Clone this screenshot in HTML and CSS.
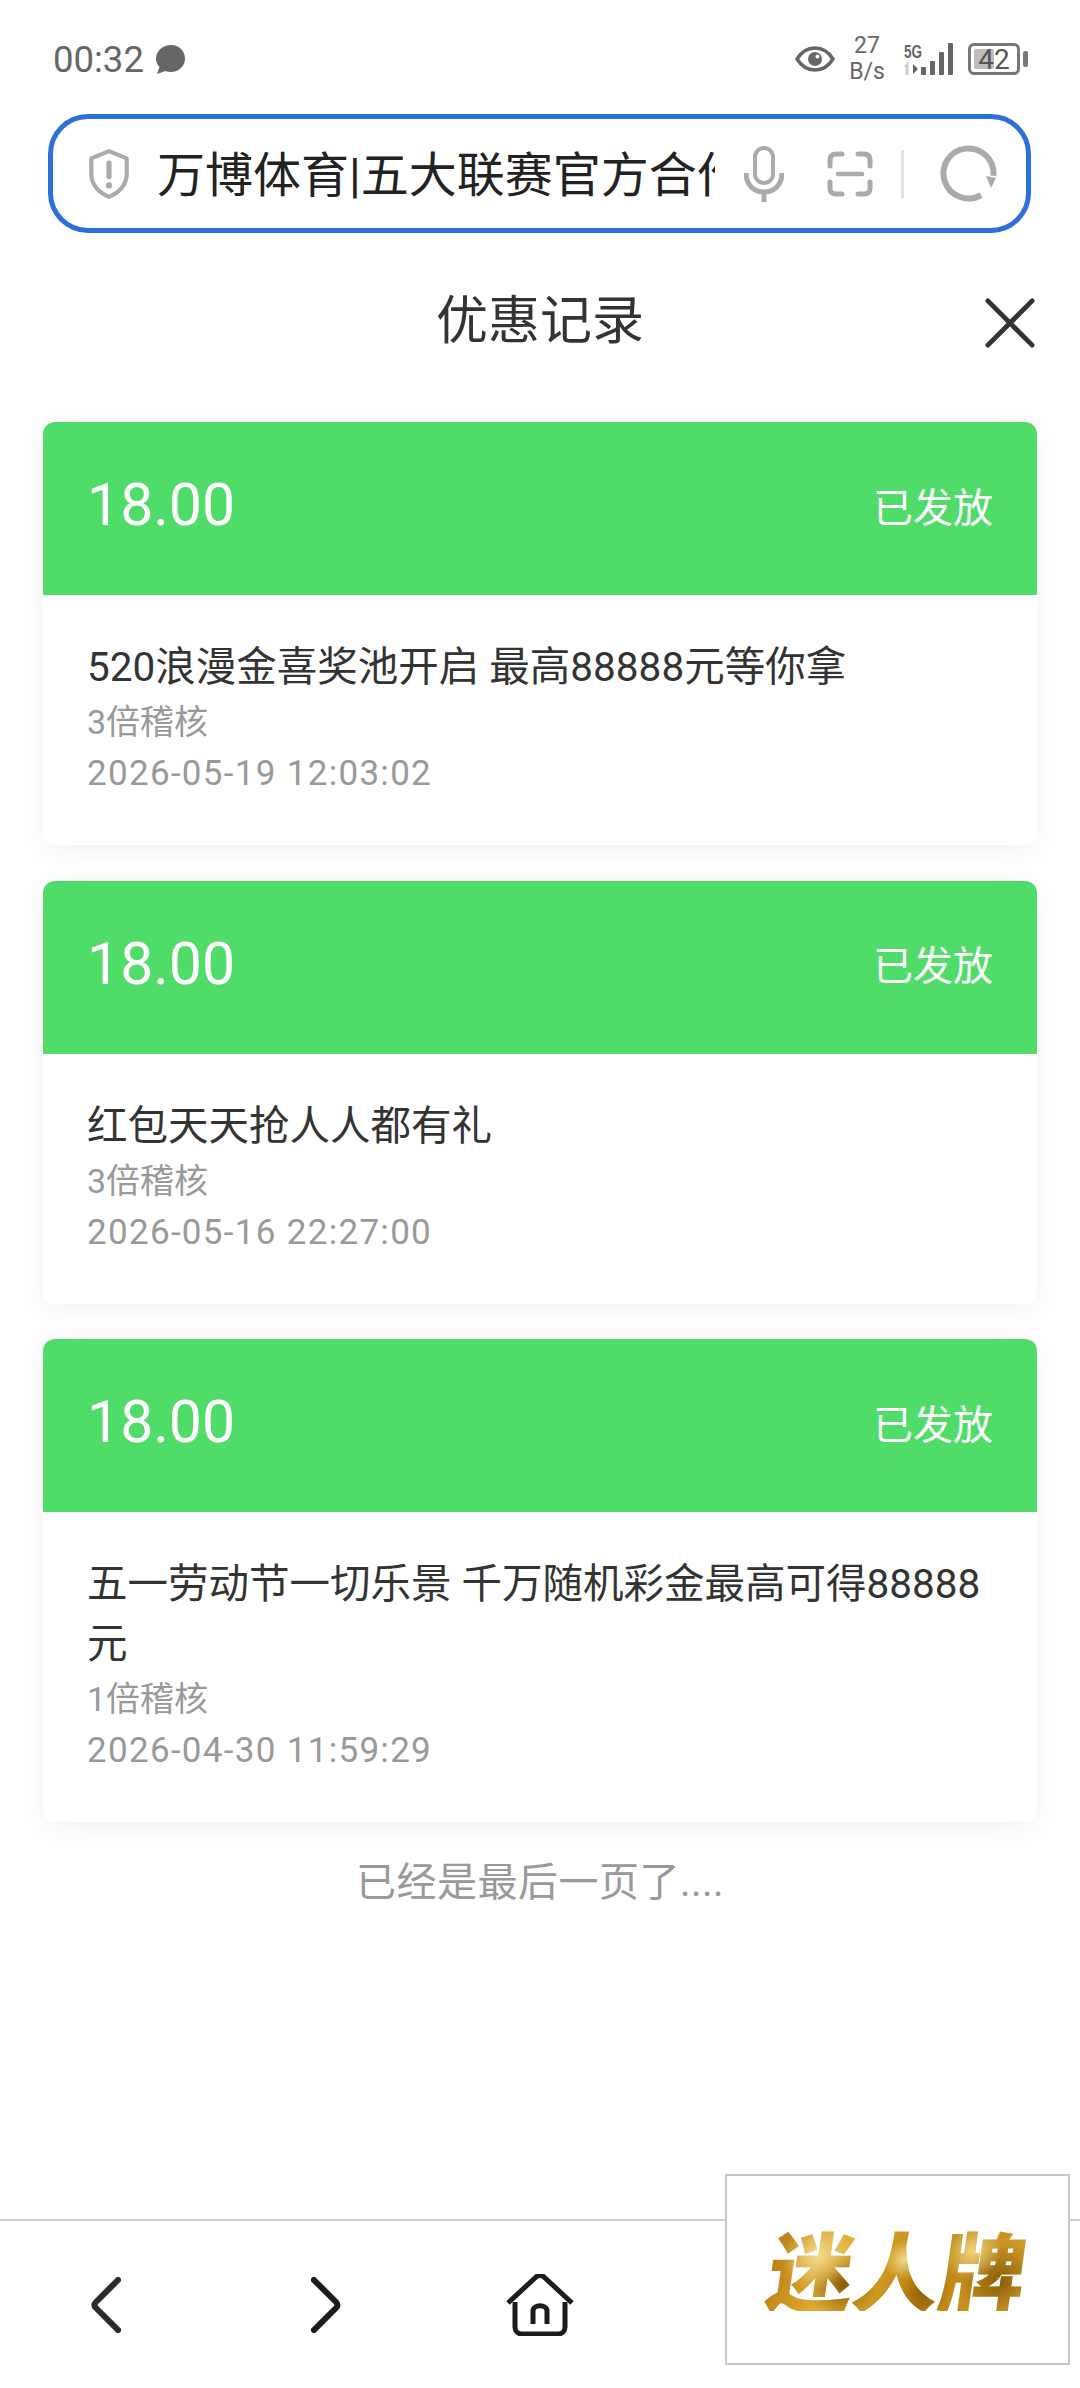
FILE: index.html
```html
<!DOCTYPE html>
<html lang="zh-CN">
<head>
    <meta charset="UTF-8">
    <meta name="viewport" content="width=device-width, initial-scale=1.0">
    <title>优惠记录</title>
    <link rel="stylesheet" href="styles.css">
</head>
<body>
    <div class="status-bar">
        <div class="status-left">
            <span class="clock">00:32</span>
            <svg class="bubble" viewBox="0 0 32 32"><path d="M17 2c8 0 14 6 14 13.500S25 29 17 29c-2 0-4-.3-5.500-1L3 31l2.500-7C3 21.500 2 18.500 2 15.500 2 8 9 2 17 2z" fill="#666"/></svg>
        </div>
        <div class="status-right">
            <svg class="eye" viewBox="0 0 40 26"><path d="M2 13C7 5 13 2 20 2s13 3 18 11c-5 8-11 11-18 11S7 21 2 13z" fill="none" stroke="#666" stroke-width="3.500"/><circle cx="20" cy="13" r="7" fill="#666"/><circle cx="22.500" cy="10.500" r="2" fill="#fff"/></svg>
            <div class="speed"><span>27</span><span>B/s</span></div>
            <svg class="signal" viewBox="0 0 56 34">
                <text x="0" y="16" class="signal-label" textLength="18" lengthAdjust="spacingAndGlyphs">5G</text>
                <path d="M3 33V23l-2 2" fill="none" stroke="#ccc" stroke-width="3"/>
                <path d="M9 22l5 5-5 5z" fill="#666"/>
                <rect x="17" y="25" width="5" height="8" rx="1" fill="#666"/>
                <rect x="26" y="19" width="5" height="14" rx="1" fill="#666"/>
                <rect x="35" y="10" width="5" height="23" rx="1" fill="#666"/>
                <rect x="44" y="1" width="5" height="32" rx="1" fill="#666"/>
            </svg>
            <div class="battery">
                <div class="battery-body">
                    <div class="battery-fill"></div>
                    <span class="battery-num">42</span>
                </div>
                <div class="battery-nub"></div>
            </div>
        </div>
    </div>

    <div class="url-bar">
        <svg class="shield" viewBox="0 0 40 48"><path d="M20 2l17 7v15c0 10-7 18-17 22C10 42 3 34 3 24V9z" fill="none" stroke="#aaa" stroke-width="4" stroke-linejoin="round"/><rect x="17.500" y="11" width="5" height="18" rx="2.500" fill="#aaa"/><circle cx="20" cy="35" r="3" fill="#aaa"/></svg>
        <div class="url-text">万博体育|五大联赛官方合作伙伴</div>
        <svg class="mic" viewBox="0 0 40 56"><rect x="11" y="2" width="18" height="35" rx="9" fill="none" stroke="#aaa" stroke-width="4"/><path d="M2 27c0 12 8 19 18 19s18-7 18-19M20 46v10" fill="none" stroke="#aaa" stroke-width="5"/></svg>
        <svg class="scan" viewBox="0 0 46 46"><path d="M3 15V9c0-4 2-6 6-6h6M31 3h6c4 0 6 2 6 6v6M43 31v6c0 4-2 6-6 6h-6M15 43H9c-4 0-6-2-6-6v-6" fill="none" stroke="#aaa" stroke-width="5" stroke-linecap="round"/><path d="M11 23h24" stroke="#aaa" stroke-width="4.500" stroke-linecap="round"/></svg>
        <div class="url-divider"></div>
        <svg class="reload" viewBox="0 0 57 57"><path d="M41 50.100A25 25 0 1 1 53.400 30.700" fill="none" stroke="#aaa" stroke-width="6"/><path d="M46 31l10 2-5 10z" fill="#aaa"/></svg>
    </div>

    <div class="page-head">
        <span></span>
        <h1 class="page-title">优惠记录</h1>
        <svg class="close" viewBox="0 0 52 52"><path d="M3 3l46 46M49 3L3 49" stroke="#333" stroke-width="5" stroke-linecap="round"/></svg>
    </div>

    <div class="list">
        <div class="card">
            <div class="card-head">
                <span class="amount">18.00</span>
                <span class="state">已发放</span>
            </div>
            <div class="card-body">
                <div class="card-title">520浪漫金喜奖池开启 最高88888元等你拿</div>
                <div class="card-sub">3倍稽核</div>
                <div class="card-date">2026-05-19 12:03:02</div>
            </div>
        </div>
        <div class="card">
            <div class="card-head">
                <span class="amount">18.00</span>
                <span class="state">已发放</span>
            </div>
            <div class="card-body">
                <div class="card-title">红包天天抢人人都有礼</div>
                <div class="card-sub">3倍稽核</div>
                <div class="card-date">2026-05-16 22:27:00</div>
            </div>
        </div>
        <div class="card">
            <div class="card-head">
                <span class="amount">18.00</span>
                <span class="state">已发放</span>
            </div>
            <div class="card-body">
                <div class="card-title">五一劳动节一切乐景 千万随机彩金最高可得88888元</div>
                <div class="card-sub">1倍稽核</div>
                <div class="card-date">2026-04-30 11:59:29</div>
            </div>
        </div>
        <div class="list-end">已经是最后一页了....</div>
    </div>

    <div class="bottom-nav">
        <svg class="nav-back" viewBox="0 0 30 56"><path d="M27 3L5 25c-2 2-2 4 0 6l22 22" fill="none" stroke="#2b2b2b" stroke-width="6" stroke-linecap="square"/></svg>
        <svg class="nav-forward" viewBox="0 0 30 56"><path d="M3 3l22 22c2 2 2 4 0 6L3 53" fill="none" stroke="#1c1c1c" stroke-width="6" stroke-linecap="square"/></svg>
        <svg class="nav-home" viewBox="0 0 70 62"><path d="M3 29L31 3c2-2 6-2 8 0l28 26" fill="none" stroke="#1c1c1c" stroke-width="5"/><path d="M10 28v25c0 4 3 7 7 7h36c4 0 7-3 7-7V28" fill="none" stroke="#1c1c1c" stroke-width="5"/><path d="M28 50V37c0-7 14-7 14 0v13" fill="none" stroke="#1c1c1c" stroke-width="5"/></svg>
    </div>

    <div class="brand-box">
        <span class="brand-text">迷人牌</span>
    </div>
</body>
</html>
```

FILE: styles.css
```css
* {
    box-sizing: border-box;
}

html, body {
    margin: 0;
    padding: 0;
}

body {
    position: relative;
    display: flex;
    flex-direction: column;
    width: 1080px;
    height: 2388px;
    overflow: hidden;
    background-color: #fff;
    font-family: Roboto, "Noto Sans CJK SC", sans-serif;
}

svg {
    display: block;
    flex: none;
}

/* status bar */
.status-bar {
    display: flex;
    justify-content: space-between;
    align-items: center;
    height: 114px;
    padding: 4px 52px 0 53px;
    color: #666;
}

.status-left {
    display: flex;
    align-items: center;
    gap: 10px;
}

.clock {
    font-size: 36.500px;
}

.bubble {
    width: 32px;
    height: 32px;
}

.status-right {
    display: flex;
    align-items: center;
}

.eye {
    width: 40px;
    height: 26px;
}

.speed {
    display: flex;
    flex-direction: column;
    align-items: center;
    width: 58px;
    margin-left: 3px;
    font-size: 23px;
    line-height: 26px;
}

.signal {
    width: 56px;
    height: 34px;
    margin-left: 8px;
}

.signal-label {
    font-family: "Liberation Sans", sans-serif;
    font-size: 19px;
    font-weight: 700;
    fill: #666;
}

.battery {
    display: flex;
    align-items: center;
    gap: 3px;
    margin-left: 8px;
}

.battery-body {
    position: relative;
    display: flex;
    justify-content: center;
    align-items: center;
    width: 52px;
    height: 32px;
    border: 3px solid #777;
    border-radius: 6px;
}

.battery-fill {
    position: absolute;
    left: 3px;
    top: 3px;
    bottom: 3px;
    width: 20px;
    background-color: #bdbdbd;
    border-radius: 2px;
}

.battery-num {
    position: relative;
    font-size: 28px;
    color: #555;
}

.battery-nub {
    width: 5px;
    height: 16px;
    background-color: #777;
    border-radius: 2px;
}

/* address bar */
.url-bar {
    display: flex;
    align-items: center;
    height: 119px;
    margin: 0 49px 0 48px;
    padding-left: 34px;
    border: 5px solid #2f6fdb;
    border-radius: 40px;
}

.shield {
    width: 44px;
    height: 50px;
}

.url-text {
    width: 558px;
    margin-left: 26px;
    margin-bottom: 6px;
    overflow: hidden;
    white-space: nowrap;
    font-size: 48px;
    color: #222;
}

.mic {
    width: 40px;
    height: 56px;
    margin-left: 29px;
}

.scan {
    width: 46px;
    height: 46px;
    margin-left: 43px;
}

.url-divider {
    width: 3px;
    height: 48px;
    margin-left: 28px;
    background-color: #e2e2e2;
}

.reload {
    width: 57px;
    height: 57px;
    margin-left: 36px;
}

/* page head */
.page-head {
    display: grid;
    grid-template-columns: 1fr auto 1fr;
    align-items: center;
    height: 174px;
    margin-bottom: 15px;
    padding: 0 45px;
}

.page-title {
    margin: 0 0 8px;
    font-size: 52px;
    font-weight: 400;
    color: #333;
}

.close {
    justify-self: end;
    width: 50px;
    height: 50px;
    margin-top: 5px;
}

/* list */
.list {
    flex: 1;
    display: flex;
    flex-direction: column;
    gap: 35.500px;
    padding: 0 43px;
}

.card {
    background-color: #fff;
    border-radius: 12px;
    overflow: hidden;
    box-shadow: 0 6px 30px rgba(0, 0, 0, 0.06);
}

.card-head {
    display: flex;
    justify-content: space-between;
    align-items: center;
    height: 173px;
    padding: 0 44px 8px;
    background-color: #50dc69;
    color: #fff;
}

.amount {
    font-size: 59px;
}

.state {
    font-size: 40px;
}

.card-body {
    padding: 42px 44px 46px;
}

.card-title {
    font-size: 40.500px;
    line-height: 60px;
    color: #333;
}

.card-sub,
.card-date {
    font-size: 34px;
    line-height: 50px;
    color: #999;
}

.card-date {
    margin-top: 2px;
    font-size: 35px;
    letter-spacing: 1.300px;
}

.list-end {
    margin-top: -5px;
    font-size: 40px;
    line-height: 60px;
    letter-spacing: 0.500px;
    text-align: center;
    color: #999;
}

/* bottom nav */
.bottom-nav {
    display: flex;
    align-items: center;
    height: 169px;
    padding: 0 0 0 91px;
    border-top: 2px solid #d0d0d0;
}

.nav-back {
    width: 30px;
    height: 56px;
}

.nav-forward {
    width: 30px;
    height: 56px;
    margin-left: 190px;
}

.nav-home {
    width: 70px;
    height: 62px;
    margin-left: 164px;
}

/* floating brand box */
.brand-box {
    position: absolute;
    left: 725px;
    top: 2174px;
    display: flex;
    justify-content: center;
    align-items: center;
    width: 345px;
    height: 191px;
    padding-bottom: 4px;
    background-color: #fff;
    border: 2px solid #c8c8c8;
}

.brand-text {
    font-family: "Noto Sans CJK SC", sans-serif;
    font-size: 86px;
    font-weight: 900;
    line-height: 1;
    transform: skewX(-8deg);
    background-image:
        radial-gradient(circle at 18% 35%, #f5dc8e 0, rgba(245, 220, 142, 0) 16%),
        radial-gradient(circle at 30% 70%, #8a5a08 0, rgba(138, 90, 8, 0) 18%),
        radial-gradient(circle at 52% 40%, #f4d98a 0, rgba(244, 217, 138, 0) 14%),
        radial-gradient(circle at 62% 80%, #91600a 0, rgba(145, 96, 10, 0) 14%),
        radial-gradient(circle at 78% 30%, #f1d47e 0, rgba(241, 212, 126, 0) 14%),
        radial-gradient(circle at 90% 65%, #8b5c09 0, rgba(139, 92, 9, 0) 16%),
        linear-gradient(105deg, #b57a10 0%, #e3b136 30%, #b8820f 60%, #d5a030 100%);
    -webkit-background-clip: text;
    background-clip: text;
    color: transparent;
}
```
